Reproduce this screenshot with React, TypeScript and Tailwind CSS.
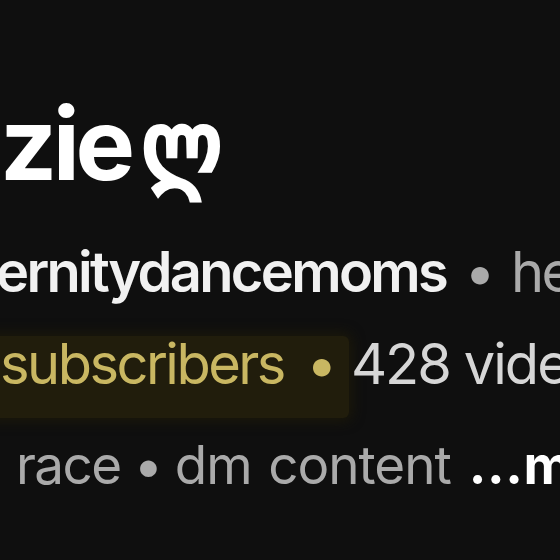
import React from "react";

export default function App() {
  return (
    <div className="w-[560px] h-[560px] overflow-hidden bg-[#0f0f0f] font-['Inter','DejaVu_Sans',sans-serif] text-white">
      <div className="flex flex-col whitespace-nowrap">
        <h1 className="mt-[94px] h-[100px] text-[100px] font-bold leading-none tracking-[-0.045em]">
          zie<span className="inline-block origin-left scale-x-[0.78] ml-[10px]">ლ</span>
        </h1>
        <div className="mt-[50px] h-[56px] text-[56px] leading-none tracking-[-0.048em] flex items-baseline">
          <span className="-ml-1 font-semibold text-[#f1f1f1]">ernitydancemoms</span>
          <span className="mx-[18px] text-[#aaaaaa]">•</span>
          <span className="text-[#aaaaaa]">he</span>
        </div>
        <div className="mt-[36px] flex">
          <div className="-ml-4 pl-4 pr-[14px] pt-0 pb-[26px] rounded-md bg-[#211d0c] text-[56px] leading-none tracking-[-0.045em] text-[#c9b762] flex items-baseline shadow-[0_0_12px_4px_#1a170a]">
            <span>subscribers</span>
            <span className="ml-[22px]">•</span>
          </div>
          <span className="ml-[2px] text-[56px] leading-none tracking-[-0.035em] text-[#d6d6d6]">428 videos</span>
        </div>
        <div className="mt-[21px] ml-4 h-[53px] text-[53px] leading-none tracking-[-0.03em] flex items-baseline text-[#aaaaaa]">
          <span>race</span>
          <span className="mx-[13px]">•</span>
          <span className="tracking-[-0.02em] [word-spacing:3px]">dm content</span>
          <span className="ml-[18px] font-bold text-white">
            <span className="tracking-[0.01em]">...</span>more
          </span>
        </div>
      </div>
    </div>
  );
}
